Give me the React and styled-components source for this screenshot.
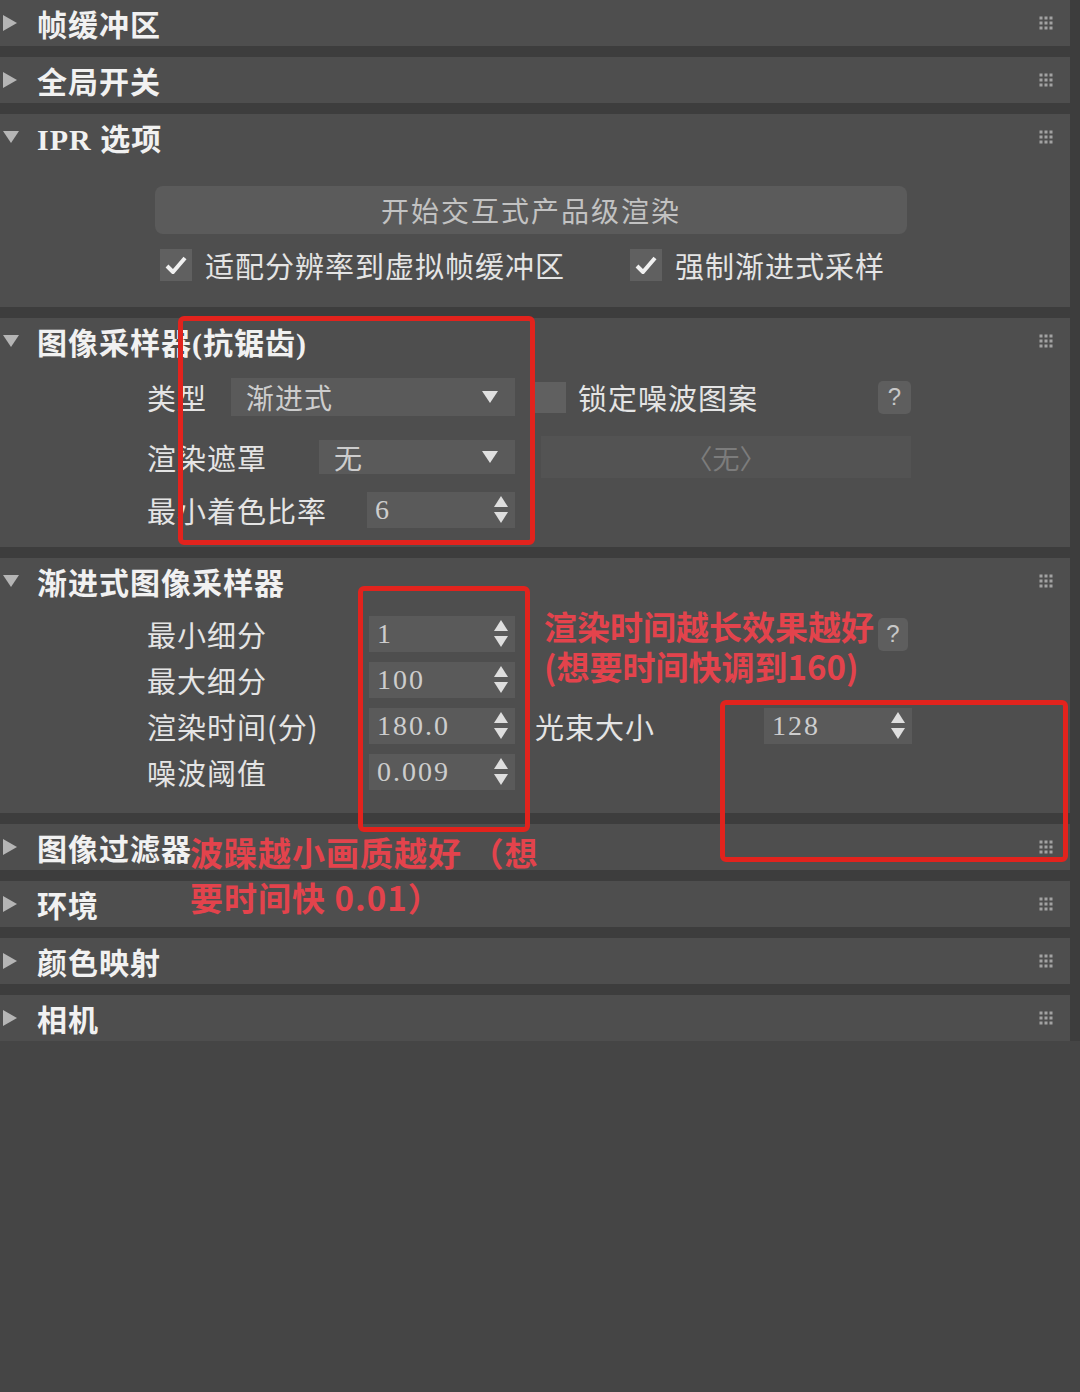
import React from 'react'
import styled, { createGlobalStyle } from 'styled-components'

const GlobalStyle = createGlobalStyle`
  html, body {
    margin: 0;
    padding: 0;
    background: #454545;
  }
  body {
    width: 1080px;
    height: 1392px;
    overflow: hidden;
    font-family: "Liberation Serif", "Noto Sans CJK SC", serif;
  }
`

const Page = styled.div`
  position: relative;
  width: 1080px;
  height: 1392px;
  background: #454545;
`

const Stack = styled.div`
  display: flex;
  flex-direction: column;
  gap: 11px;
  padding-right: 10px;
  background: #3d3d3d;
`

const Panel = styled.section`
  background: #4e4e4e;
`

const Header = styled.div`
  height: 46px;
  display: flex;
  align-items: center;
  padding: 0 17px 0 3px;
  color: #f1f1f1;
  font-size: 30px;
  font-weight: 700;
  letter-spacing: 1px;
`

const CaretBox = styled.div`
  width: 16px;
  height: 16px;
  display: flex;
  align-items: center;
`

const Title = styled.div`
  margin-left: 18px;
  flex: 1;
  white-space: nowrap;
`

const Body = styled.div`
  padding: ${p => p.$pad};
`

const BigButton = styled.div`
  margin-left: 155px;
  width: 752px;
  height: 48px;
  border-radius: 8px;
  background: #5b5b5b;
  color: #c2c2c2;
  font-family: "Noto Sans CJK SC", sans-serif;
  font-size: 28px;
  letter-spacing: 2px;
  display: flex;
  align-items: center;
  justify-content: center;
`

const CheckRow = styled.div`
  margin-top: 10px;
  height: 40px;
  padding-left: 160px;
  display: grid;
  grid-template-columns: 470px auto;
  align-items: center;
`

const CheckItem = styled.div`
  display: flex;
  align-items: center;
`

const Box = styled.div`
  width: ${p => p.$size}px;
  height: ${p => p.$size}px;
  background: #606060;
  display: flex;
  align-items: center;
  justify-content: center;
  flex: none;
`

const Label = styled.div`
  color: #e4e4e4;
  font-family: "Noto Sans CJK SC", sans-serif;
  font-size: 29px;
  letter-spacing: 1px;
  white-space: nowrap;
  margin-left: ${p => p.$ml || 0}px;
`

const Row = styled.div`
  height: ${p => p.$h}px;
  margin-top: ${p => p.$mt || 0}px;
  display: flex;
  align-items: center;
  padding-left: 147px;
`

const LeftCell = styled.div`
  width: 368px;
  height: 100%;
  display: flex;
  align-items: center;
  justify-content: space-between;
`

const RightCell = styled.div`
  width: 376px;
  height: 100%;
  margin-left: ${p => p.$ml || 20}px;
  display: flex;
  align-items: center;
`

const Field = styled.div`
  width: ${p => p.$w}px;
  height: ${p => p.$h}px;
  background: #5a5a5a;
  display: flex;
  align-items: center;
  justify-content: space-between;
  padding: 0 ${p => p.$pr}px 0 ${p => p.$pl}px;
  box-sizing: border-box;
  color: #cdcdcd;
  font-size: 28px;
  flex: none;
  margin-left: ${p => p.$ml || 0}px;
`

const FieldText = styled.span`
  font-family: ${p => (p.$num ? '"Liberation Serif", serif' : '"Noto Sans CJK SC", sans-serif')};
  letter-spacing: ${p => (p.$num ? 2 : 1)}px;
`

const Ghost = styled.div`
  width: 370px;
  height: 42px;
  background: #535353;
  color: #7c7c7c;
  font-family: "Noto Sans CJK SC", sans-serif;
  font-size: 27px;
  display: flex;
  align-items: center;
  justify-content: center;
  margin-left: 6px;
`

const Help = styled.div`
  width: ${p => p.$w}px;
  height: 33px;
  border-radius: 5px;
  background: #5e5e5e;
  color: #c8c8c8;
  font-family: "Liberation Sans", sans-serif;
  font-size: 24px;
  display: flex;
  align-items: center;
  justify-content: center;
  margin-left: auto;
  margin-right: ${p => p.$mr || 0}px;
`

const Frame = styled.div`
  position: absolute;
  left: ${p => p.$x}px;
  top: ${p => p.$y}px;
  width: ${p => p.$w}px;
  height: ${p => p.$h}px;
  box-sizing: border-box;
  border: 5px solid #e2231d;
  border-radius: 6px;
  pointer-events: none;
`

const Note = styled.div`
  position: absolute;
  left: ${p => p.$x}px;
  top: ${p => p.$y}px;
  color: #e3434c;
  font-family: "Noto Sans CJK SC", sans-serif;
  font-weight: 700;
  font-size: 33px;
  line-height: ${p => p.$lh}px;
  letter-spacing: ${p => p.$ls}px;
  white-space: pre;
`

const Caret = ({ open }) => (
  <CaretBox>
    {open ? (
      <svg width="16" height="12" viewBox="0 0 16 12">
        <polygon points="0,0 16,0 8,12" fill="#b5b5b5" />
      </svg>
    ) : (
      <svg width="14" height="16" viewBox="0 0 14 16">
        <polygon points="0,0 14,8 0,16" fill="#b5b5b5" />
      </svg>
    )}
  </CaretBox>
)

const Grip = () => (
  <svg width="14" height="14" viewBox="0 0 14 14">
    {[2, 7, 12].map(y =>
      [2, 7, 12].map(x => <rect key={x + '-' + y} x={x - 1.5} y={y - 1.5} width="3" height="3" fill="#a2a2a2" />)
    )}
  </svg>
)

const Check = () => (
  <svg width="22" height="20" viewBox="0 0 22 20">
    <path d="M2 11 L8 17 L20 3" stroke="#f0f0f0" strokeWidth="4" fill="none" strokeLinejoin="round" />
  </svg>
)

const DropArrow = () => (
  <svg width="16" height="12" viewBox="0 0 16 12">
    <polygon points="0,0 16,0 8,12" fill="#e0e0e0" />
  </svg>
)

const SpinArrows = () => (
  <svg width="14" height="28" viewBox="0 0 14 28">
    <polygon points="7,0 14,11 0,11" fill="#dedede" />
    <polygon points="0,16 14,16 7,27" fill="#dedede" />
  </svg>
)

const Section = ({ title, open, children }) => (
  <Panel>
    <Header>
      <Caret open={open} />
      <Title>{title}</Title>
      <Grip />
    </Header>
    {children}
  </Panel>
)

const Spinner = ({ value, w = 146, h = 36, ml }) => (
  <Field $w={w} $h={h} $pl={8} $pr={7} $ml={ml}>
    <FieldText $num>{value}</FieldText>
    <SpinArrows />
  </Field>
)

const Dropdown = ({ value, w, h }) => (
  <Field $w={w} $h={h} $pl={15} $pr={17}>
    <FieldText>{value}</FieldText>
    <DropArrow />
  </Field>
)

const App = () => (
  <>
    <GlobalStyle />
    <Page>
      <Stack>
        <Section title="帧缓冲区" />
        <Section title="全局开关" />
        <Section title="IPR 选项" open>
          <Body $pad="26px 0 23px">
            <BigButton>开始交互式产品级渲染</BigButton>
            <CheckRow>
              <CheckItem>
                <Box $size={32}><Check /></Box>
                <Label $ml={13}>适配分辨率到虚拟帧缓冲区</Label>
              </CheckItem>
              <CheckItem>
                <Box $size={32}><Check /></Box>
                <Label $ml={13}>强制渐进式采样</Label>
              </CheckItem>
            </CheckRow>
          </Body>
        </Section>
        <Section title="图像采样器(抗锯齿)" open>
          <Body $pad="14px 0 19px">
            <Row $h={38}>
              <LeftCell>
                <Label>类型</Label>
                <Dropdown value="渐进式" w={284} h={38} />
              </LeftCell>
              <RightCell>
                <Box $size={31} />
                <Label $ml={12}>锁定噪波图案</Label>
                <Help $w={33}>?</Help>
              </RightCell>
            </Row>
            <Row $h={42} $mt={20}>
              <LeftCell>
                <Label>渲染遮罩</Label>
                <Dropdown value="无" w={196} h={34} />
              </LeftCell>
              <RightCell>
                <Ghost>〈无〉</Ghost>
              </RightCell>
            </Row>
            <Row $h={36} $mt={14}>
              <LeftCell>
                <Label>最小着色比率</Label>
                <Spinner value="6" w={148} />
              </LeftCell>
            </Row>
          </Body>
        </Section>
        <Section title="渐进式图像采样器" open>
          <Body $pad="12px 0 23px">
            <Row $h={36}>
              <LeftCell>
                <Label>最小细分</Label>
                <Spinner value="1" />
              </LeftCell>
              <RightCell>
                <Help $w={30} $mr={3}>?</Help>
              </RightCell>
            </Row>
            <Row $h={36} $mt={10}>
              <LeftCell>
                <Label>最大细分</Label>
                <Spinner value="100" />
              </LeftCell>
            </Row>
            <Row $h={36} $mt={10}>
              <LeftCell>
                <Label>渲染时间(分)</Label>
                <Spinner value="180.0" />
              </LeftCell>
              <RightCell>
                <Label>光束大小</Label>
                <Spinner value="128" w={148} ml={109} />
              </RightCell>
            </Row>
            <Row $h={36} $mt={10}>
              <LeftCell>
                <Label>噪波阈值</Label>
                <Spinner value="0.009" />
              </LeftCell>
            </Row>
          </Body>
        </Section>
        <Section title="图像过滤器" />
        <Section title="环境" />
        <Section title="颜色映射" />
        <Section title="相机" />
      </Stack>

      <Frame $x={178} $y={316} $w={357} $h={229} />
      <Frame $x={358} $y={586} $w={172} $h={246} />
      <Frame $x={720} $y={700} $w={348} $h={162} />

      <Note $x={544} $y={606} $lh={40} $ls={0}>{'渲染时间越长效果越好\n(想要时间快调到160)'}</Note>
      <Note $x={190} $y={830} $lh={45} $ls={1}>{'波躁越小画质越好 （想\n要时间快 0.01）'}</Note>
    </Page>
  </>
)

export default App
